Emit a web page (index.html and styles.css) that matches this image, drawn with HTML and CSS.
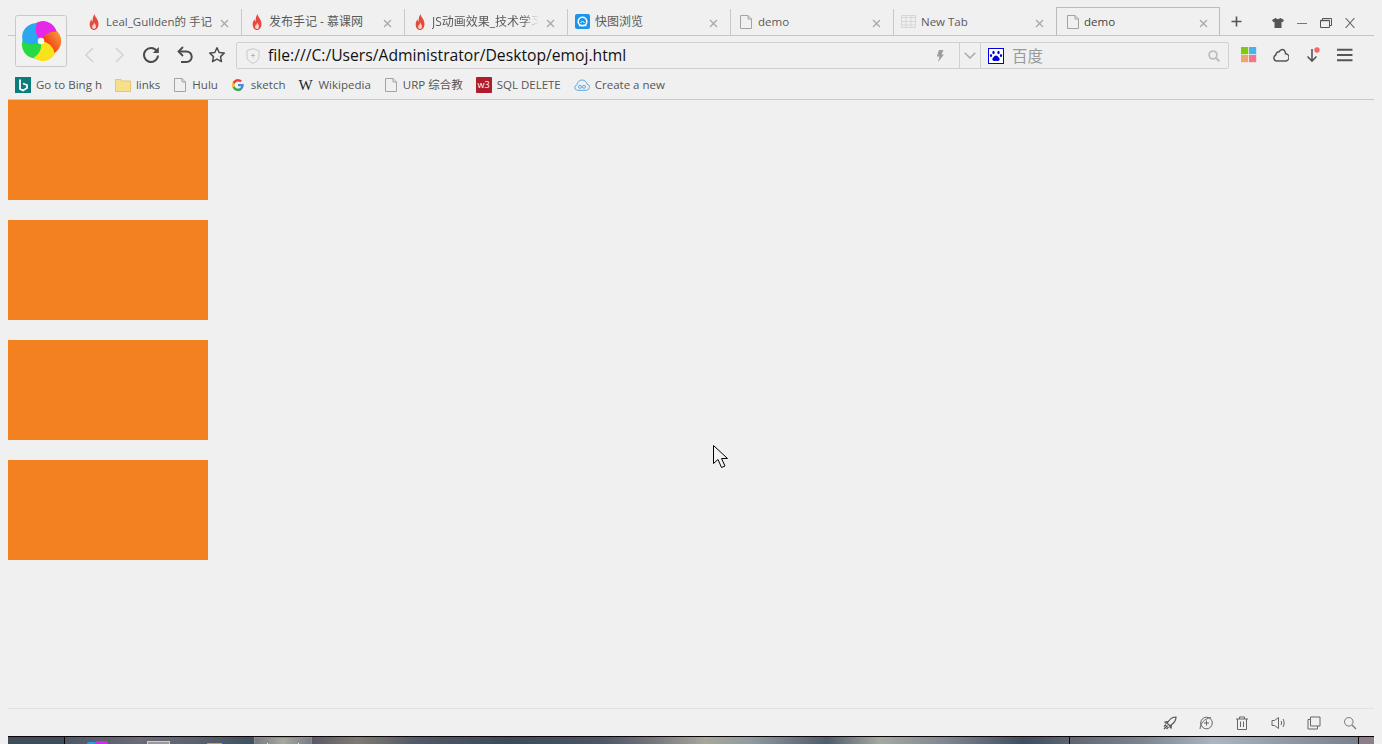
FILE: index.html
```html
<!DOCTYPE html>
<html lang="zh">
<head>
<meta charset="utf-8">
<title>demo</title>
<link rel="stylesheet" href="styles.css">
</head>
<body>
<svg width="0" height="0" class="defs">
  <defs>
    <symbol id="flame" viewBox="0 0 12 16" preserveAspectRatio="xMidYMid meet"><g transform="translate(1 0) scale(.84 1)"><path d="M6.500 0C7 3 11.300 5 11.300 10 11.300 13.500 8.800 16 6 16 3 16 .8 13.500 .8 10.500 .8 8 2 6.500 3 5 3 6.500 3.500 7.300 4.300 7.800 4 5 5 2 6.500 0z" fill="#e4493b"/><path d="M6.300 8.500c.3 1.300 2 2.200 2 4 0 1.400-1 2.500-2.300 2.500S3.700 14 3.700 12.700c0-.9.400-1.500.8-2 .1.400.3.700.6.900 0-1.100.6-2.300 1.200-3.100z" fill="#f8d6cc"/></g></symbol>
    <symbol id="page" viewBox="0 0 12 14"><path d="M.5.500h7.500l3.500 3.500v9.500H.5zM8 .5V4h3.500" fill="none" stroke="#a3a3a3"/></symbol>
    <symbol id="x" viewBox="0 0 9 9"><path d="M1 1l7 7M8 1L1 8" stroke="#a8a8a8" stroke-width="1.300" fill="none"/></symbol>
    <path id="blade" d="M0 0C-5-7-5-15-1-21A16 16 0 0 1 20.500-4.500C13-8 6-6 0 0z"/>
    <linearGradient id="g-orange" x1="0" y1="0" x2="0" y2="1"><stop offset="0" stop-color="#f8963a"/><stop offset="1" stop-color="#f0300c"/></linearGradient>
  </defs>
</svg>
<div class="window">
  <header class="tabstrip">
    <div class="tab"><svg class="tab-icon"><use href="#flame"/></svg><span class="tab-title">Leal_Gullden的 手记</span><svg class="tab-x"><use href="#x"/></svg></div>
    <div class="tab"><svg class="tab-icon"><use href="#flame"/></svg><span class="tab-title cjk">发布手记 - 慕课网</span><svg class="tab-x"><use href="#x"/></svg></div>
    <div class="tab"><svg class="tab-icon"><use href="#flame"/></svg><span class="tab-title cjk fade">JS动画效果_技术学习</span><svg class="tab-x"><use href="#x"/></svg></div>
    <div class="tab"><svg class="tab-icon wide" viewBox="0 0 15 15"><rect width="15" height="15" rx="2" fill="#1b95ea"/><circle cx="7.500" cy="7.500" r="4.300" fill="none" stroke="#fff" stroke-width="1.600"/><path d="M4 11.500h7.500" stroke="#fff" stroke-width="1.500"/><path d="M5.500 9l2-2 2 2" stroke="#fff" fill="none"/></svg><span class="tab-title cjk">快图浏览</span><svg class="tab-x"><use href="#x"/></svg></div>
    <div class="tab"><svg class="tab-icon"><use href="#page"/></svg><span class="tab-title">demo</span><svg class="tab-x"><use href="#x"/></svg></div>
    <div class="tab"><svg class="tab-icon wide" viewBox="0 0 15 13"><path d="M.5 2.500h14M.5 6.500h14M.5 10h14M5 .5v12M10 .5v12M.5.500h14v12H.5z" fill="none" stroke="#d6d6d6"/></svg><span class="tab-title">New Tab</span><svg class="tab-x"><use href="#x"/></svg></div>
    <div class="tab active"><svg class="tab-icon"><use href="#page"/></svg><span class="tab-title">demo</span><svg class="tab-x"><use href="#x"/></svg></div>
    <svg class="newtab" viewBox="0 0 11 11"><path d="M5.500.5v10M.5 5.500h10" stroke="#555" stroke-width="1.600"/></svg>
    <div class="winctl">
      <svg class="ctl" viewBox="0 0 12 10"><path d="M3.500 0L0 2l1.300 2.300 1.200-.5V10h7V3.800l1.200.5L12 2 8.500 0 6 1.200z" fill="#555"/></svg>
      <svg class="ctl" viewBox="0 0 12 10"><path d="M1 5.500h10" stroke="#777"/></svg>
      <svg class="ctl" viewBox="0 0 12 10"><path d="M.5 2.500h9v7h-9zM2.500 2.500V.5h9v7h-2" fill="none" stroke="#555"/><path d="M.5 2.500h9" stroke="#555" stroke-width="1.400"/></svg>
      <svg class="ctl" viewBox="0 0 12 10"><path d="M1.500 0l9 10M10.500 0l-9 10" stroke="#666" stroke-width="1.100"/></svg>
    </div>
  </header>

  <div class="toolbar">
    <div class="nav">
      <svg class="nav-i" viewBox="0 0 18 18"><path d="M12 2L5 9l7 7" fill="none" stroke="#d4d4d4" stroke-width="1.600"/></svg>
      <svg class="nav-i" viewBox="0 0 18 18"><path d="M6 2l7 7-7 7" fill="none" stroke="#d4d4d4" stroke-width="1.600"/></svg>
      <svg class="nav-i reload" viewBox="0 0 18 18"><path d="M14.800 5A7 7 0 1 0 16 9.500" fill="none" stroke="#4c4c4c" stroke-width="2"/><path d="M16.800 1v6H10.800z" fill="#4c4c4c"/></svg>
      <svg class="nav-i undo" viewBox="0 0 18 18"><path d="M7 1L2.500 5.500 7 10" fill="none" stroke="#4c4c4c" stroke-width="1.800"/><path d="M3 5.500h7.500a5 5 0 0 1 0 10.500H5" fill="none" stroke="#4c4c4c" stroke-width="2"/></svg>
      <svg class="nav-i star" viewBox="0 0 18 18"><path d="M9 1.800l2.200 4.700 5 .6-3.700 3.500 1 5L9 13.100l-4.500 2.500 1-5L1.800 7.100l5-.6z" fill="none" stroke="#4c4c4c" stroke-width="1.500" stroke-linejoin="round"/></svg>
    </div>
    <div class="addr">
      <svg class="shield" viewBox="0 0 14 16"><path d="M7 .7l6 1.800v6c0 3.200-2.600 5.500-6 6.800C3.600 14 1 11.700 1 8.500v-6z" fill="none" stroke="#c6c6c6"/><path d="M7 5.500v4M5 7.500h4" stroke="#b5b5b5"/></svg>
      <span class="url">file:///C:/Users/Administrator/Desktop/emoj.html</span>
      <svg class="bolt" viewBox="0 0 8 12"><path d="M3 0h4.500L5.500 4.500H8L2 12l1.500-5.500H.8z" fill="#9c9c9c"/></svg>
      <div class="drop"><svg class="chev" viewBox="0 0 12 7"><path d="M.7.700L6 6l5.300-5.300" fill="none" stroke="#aaa" stroke-width="1.500"/></svg></div>
      <div class="search">
        <svg class="paw" viewBox="0 0 16 16"><rect x=".5" y=".5" width="15" height="15" fill="#fff" stroke="#0000e0"/><g fill="#0000e0"><ellipse cx="5.500" cy="4.500" rx="1.200" ry="1.700"/><ellipse cx="10.500" cy="4.500" rx="1.200" ry="1.700"/><ellipse cx="3" cy="7.500" rx="1.100" ry="1.500"/><ellipse cx="13" cy="7.500" rx="1.100" ry="1.500"/><path d="M8 7.500c1.500 0 2 1.500 3 2.300 1.300 1 .8 3.200-1 3.200-.8 0-1.300-.3-2-.3s-1.200.3-2 .3c-1.800 0-2.300-2.200-1-3.200 1-.8 1.500-2.300 3-2.300z"/></g></svg>
        <span class="engine">百度</span>
        <svg class="mag" viewBox="0 0 12 12"><circle cx="5" cy="5" r="3.900" fill="none" stroke="#bdbdbd" stroke-width="1.800"/><path d="M8 8l3.300 3.300" stroke="#bdbdbd" stroke-width="2"/></svg>
      </div>
    </div>
    <div class="tools">
      <svg class="tool" viewBox="0 0 14 14"><rect width="6.300" height="6.300" fill="#7ecb0e"/><rect x="7" width="6.300" height="6.300" fill="#4fb0ee"/><rect y="7" width="6.300" height="6.300" fill="#f4a272"/><rect x="7" y="7" width="6.300" height="6.300" fill="#f3758a"/></svg>
      <svg class="tool" viewBox="0 0 16 14"><path d="M3.800 13a3 3 0 0 1-1.200-5.700C3 4.500 5 3.500 6.200 3.700 7.200 1.500 10 .8 11.600 2.800c.7.800 1 1.800.9 3a3.600 3.600 0 0 1-.2 7.200z" fill="none" stroke="#555" stroke-width="1.500"/></svg>
      <svg class="tool" viewBox="0 0 16 16"><path d="M7 2v12M2.500 9.500L7 14l4.500-4.500" fill="none" stroke="#555" stroke-width="1.600"/><circle cx="12" cy="3" r="2.700" fill="#f0686a"/></svg>
      <svg class="tool" viewBox="0 0 15 13"><path d="M0 1.500h14.500M0 6.500h14.500M0 11.500h14.500" stroke="#555" stroke-width="1.800"/></svg>
    </div>
  </div>

  <nav class="bookmarks">
    <a class="bm"><svg class="bm-i" viewBox="0 0 16 16"><rect width="16" height="16" fill="#0b7c7c"/><path d="M5 2.500v9.500l3 1.500 4-2.500V8L8 6.500" fill="none" stroke="#fff" stroke-width="1.800"/></svg>Go to Bing h</a>
    <a class="bm"><svg class="bm-i" viewBox="0 0 16 14"><path d="M.5 2.500V1.500h5.500l1 1.500h8.500v10.500H.5z" fill="#f6e08e" stroke="#e5c66e"/></svg>links</a>
    <a class="bm"><svg class="bm-n"><use href="#page"/></svg>Hulu</a>
    <a class="bm"><svg class="bm-n" viewBox="0 0 12 12"><path d="M11.700 6.100c0-.4 0-.8-.1-1.200H6v2.300h3.200c-.1.800-.6 1.400-1.200 1.800v1.500h1.900c1.100-1 1.800-2.600 1.800-4.400z" fill="#4285f4"/><path d="M6 12c1.600 0 3-.5 3.900-1.500L8 9c-.5.400-1.200.6-2 .6-1.500 0-2.800-1-3.300-2.400h-2v1.500C1.700 10.700 3.700 12 6 12z" fill="#34a853"/><path d="M2.700 7.200a3.600 3.600 0 0 1 0-2.300V3.300h-2a6 6 0 0 0 0 5.400z" fill="#fbbc05"/><path d="M6 2.400c.9 0 1.600.3 2.200.9l1.700-1.700A5.700 5.700 0 0 0 6 0C3.700 0 1.700 1.300.7 3.300l2 1.600C3.200 3.400 4.500 2.400 6 2.400z" fill="#ea4335"/></svg><span class="bm-s">sketch</span></a>
    <a class="bm"><span class="wiki">W</span>Wikipedia</a>
    <a class="bm"><svg class="bm-n"><use href="#page"/></svg>URP 综合教</a>
    <a class="bm"><span class="w3">w3</span>SQL DELETE</a>
    <a class="bm"><svg class="bm-i" viewBox="0 0 16 12"><path d="M3.500 11.300a2.800 2.800 0 0 1-.6-5.500C3.500 3 5.500 1 8 1s4.500 1.800 5 4a3.200 3.200 0 0 1-.5 6.300z" fill="none" stroke="#5aa9e6"/><circle cx="6" cy="7.800" r="1.500" fill="none" stroke="#5aa9e6"/><circle cx="10" cy="7.800" r="1.500" fill="none" stroke="#5aa9e6"/></svg>Create a new</a>
  </nav>

  <main class="content">
    <div class="box"></div>
    <div class="box"></div>
    <div class="box"></div>
    <div class="box"></div>
  </main>

  <footer class="status">
    <svg class="st" viewBox="0 0 14 14"><path d="M13 1c-3 0-5.500 1.500-7.300 4L4 7l3 3 2-1.700C11.500 6.500 13 4 13 1zM4.500 5.500L2 6l1.500 1.500M8.500 9.500L8 12l-1.500-1.500M4.500 9.500L1 13M3 8.500L1 10.500M5.500 11L3.500 13" fill="none" stroke="#555" stroke-width="1.200"/></svg>
    <svg class="st" viewBox="0 0 14 14"><circle cx="7.500" cy="7" r="5.800" fill="none" stroke="#666"/><path d="M7.500 4.500v5M5 7h5" stroke="#666"/><path d="M1 13C1.500 7 5 3 12 1.500" fill="none" stroke="#666"/></svg>
    <svg class="st" viewBox="0 0 14 14"><path d="M1 3h12M4.500 3V1h5v2M2.500 3v10.500h9V3M5.500 5.500v5.500M8.500 5.500v5.500" fill="none" stroke="#666"/></svg>
    <svg class="st" viewBox="0 0 14 14"><path d="M1 4.500h2.500L7.500 1.500v11L3.500 9.500H1zM10 5c.8 1.200.8 2.800 0 4M12 3c1.500 2.500 1.500 5.500 0 8" fill="none" stroke="#666"/></svg>
    <svg class="st" viewBox="0 0 14 14"><path d="M3.500 1h9.500v9H3.500zM3.500 3.500H1v9.500h9.500v-3" fill="none" stroke="#666"/></svg>
    <svg class="st" viewBox="0 0 14 14"><circle cx="5.800" cy="5.800" r="4.300" fill="none" stroke="#777"/><path d="M9 9l4 4" stroke="#777" stroke-width="1.200"/></svg>
  </footer>

  <div class="taskbar">
    <div class="task start"></div>
    <div class="task apps">
      <span class="peek peek-blue"></span><span class="peek peek-pink"></span>
      <span class="peek peek-grey"></span>
      <span class="peek peek-orange"></span>
    </div>
    <div class="task current"><span class="peek mark mark-a"></span><span class="peek mark mark-b"></span></div>
    <div class="task wall"></div>
    <div class="task tray"></div>
    <div class="task corner"></div>
  </div>
</div>

<svg class="logo-frame" viewBox="0 0 52 52">
  <rect x=".5" y=".5" width="51" height="51" rx="2" fill="#f1f1f1" stroke="#c9c9c9"/>
  <g transform="translate(26 26) scale(.86)">
    <use href="#blade" fill="#27d944" transform="rotate(198)"/>
    <use href="#blade" fill="#f8e21c" transform="rotate(126)"/>
    <use href="#blade" fill="url(#g-orange)" transform="rotate(54)"/>
    <use href="#blade" fill="#e527e8" transform="rotate(-18)"/>
    <use href="#blade" fill="#2ba6f0" transform="rotate(-90)"/>
    <circle r="3.800" fill="#f4f4f4"/>
  </g>
</svg>
<svg class="cursor" viewBox="0 0 15 25"><path d="M.5.500v18l4.500-4 3.500 8 3.500-1.500-3.500-7.500h6z" fill="#f4f4f4" stroke="#000"/></svg>
</body>
</html>
```

FILE: styles.css
```css
* { box-sizing: border-box; }
html, body { margin: 0; height: 744px; overflow: hidden; }
body {
  background: #f0f0f0;
  font-family: "Open Sans", "Noto Sans CJK SC", sans-serif;
  font-size: 11.5px;
  color: #555;
}
.defs { position: absolute; }
.window { height: 744px; margin: 0 8px; display: flex; flex-direction: column; }

.tabstrip {
  height: 36px;
  padding: 8px 0 0 71px;
  display: flex;
  border-bottom: 1px solid #c6c6c6;
  flex: none;
}
.tab {
  width: 163px;
  height: 26px;
  display: flex;
  align-items: center;
  padding: 0 0 1px 9px;
  border-right: 1px solid #c8c8c8;
  margin-top: 1px;
  flex: none;
}
.tab.active {
  width: 164px;
  height: 28px;
  margin: -1px 0 0 -1px;
  background: #f0f0f0;
  border: 1px solid #bbb;
  border-bottom: 0;
  padding: 0 0 0 10px;
}
.tab-icon { width: 12px; height: 16px; flex: none; margin-right: 6px; }
.tab-icon.wide { width: 15px; height: 15px; margin: 0 5px 0 -2px; }
.tab.active .tab-icon { margin-right: 5px; }
.tab-title { width: 107px; flex: none; white-space: nowrap; overflow: hidden; font-size: 11.5px; color: #5a5a5a; line-height: 17px; }
.tab-title.cjk { font-size: 12px; }
.tab.active .tab-title { color: #444; }
.tab-title.fade { mask-image: linear-gradient(to right, #000 85%, transparent); }
.tab-x { width: 9px; height: 9px; flex: none; margin: 4px 0 0 7px; }
.tab.active .tab-x { margin-left: 8px; }
.newtab { width: 11px; height: 11px; margin: 8px 0 0 11px; flex: none; }
.winctl { display: flex; margin-left: 30px; margin-top: 10px; gap: 12px; }
.ctl { width: 12px; height: 10px; flex: none; }

.toolbar { height: 38px; display: flex; align-items: center; flex: none; padding: 5px 0 6px; }
.nav { width: 228px; padding-left: 73px; display: flex; align-items: center; gap: 11px; flex: none; }
.nav-i { width: 18px; height: 18px; flex: none; }
.reload { margin-left: 3px; }
.undo { margin-left: 5px; }
.star { margin-left: 3px; }
.addr {
  width: 993px;
  height: 27px;
  margin-top: 1px;
  align-self: flex-start;
  border: 1px solid #d0d0d0;
  border-radius: 2px;
  display: flex;
  align-items: center;
  flex: none;
}
.shield { width: 14px; height: 16px; margin-left: 9px; flex: none; }
.url { width: 664px; margin-left: 8px; padding-bottom: 2px; font-size: 15.7px; color: #111; white-space: nowrap; flex: none; }
.bolt { width: 8px; height: 12px; flex: none; margin-left: 4px; }
.drop { width: 21px; height: 25px; margin-left: 15px; border-left: 1px solid #d0d0d0; display: flex; align-items: center; justify-content: center; flex: none; }
.chev { width: 12px; height: 7px; }
.search { flex: 1; height: 25px; border-left: 1px solid #d0d0d0; display: flex; align-items: center; padding: 0 8px 0 7px; }
.paw { width: 16px; height: 16px; flex: none; }
.engine { font-size: 15.5px; color: #9a9a9a; margin-left: 8px; flex: 1; }
.mag { width: 12px; height: 12px; flex: none; }
.tools { display: flex; align-items: center; margin-left: 12px; gap: 16px; }
.tool { width: 16px; height: 16px; flex: none; }

.bookmarks {
  height: 26px;
  border-bottom: 1px solid #c8c8c8;
  display: flex;
  align-items: center;
  gap: 13px;
  padding: 0 0 5px 7px;
  flex: none;
}
.bm { display: flex; align-items: center; gap: 5px; white-space: nowrap; color: #555; }
.bm-i { width: 16px; height: 16px; flex: none; margin-top: 2px; }
.bm-n { width: 12px; height: 14px; flex: none; margin: 2px 1px 0; }
.bm-s { margin-left: 1px; }
.wiki { width: 15px; margin-top: 2px; font-family: "Liberation Serif", serif; font-size: 15px; line-height: 16px; color: #222; flex: none; }
.w3 {
  width: 16px; height: 16px; margin-top: 2px; background: #b01c2e; color: #fff;
  font-size: 9px; line-height: 16px; text-align: center; border-radius: 1px; flex: none;
}

.content { flex: 1; display: flex; flex-direction: column; align-items: flex-start; min-height: 0; }
.box { width: 200px; height: 100px; margin-bottom: 20px; background: #f38120; flex: none; }

.status {
  height: 28px;
  border-top: 1px solid #e2e2e2;
  display: flex;
  justify-content: flex-end;
  align-items: center;
  gap: 22px;
  padding-right: 17px;
  flex: none;
}
.st { width: 14px; height: 14px; flex: none; }

.taskbar {
  height: 8px;
  flex: none;
  display: flex;
  border-top: 1px solid #0c0508;
  background: #5a6570;
}
.task { height: 100%; flex: none; position: relative; overflow: hidden; }
.start { width: 57px; background: #3f4c5a; border-right: 1px solid #0c0508; }
.apps { width: 189px; background: linear-gradient(to right, #4d5866, #6a6a78 40%, #59626f 70%, #3e5060); }
.current { width: 58px; background: linear-gradient(to right, #777b82, #a5a9a0 50%, #7a7e86); border: 1px solid #8b8b93; border-bottom: 0; }
.wall {
  width: 758px;
  background: linear-gradient(to right, #5a5a68, #7f7a72 6%, #4f5968 14%, #3c4a5a 26%, #4b5664 38%, #6d7078 44%, #a5a89a 52%, #8f9ba0 58%, #4f5c6a 68%, #a4aaa2 75%, #7d8690 84%, #3f4d5e 94%, #5c6672);
  border-right: 1px solid #0c0508;
}
.tray { width: 289px; background: linear-gradient(to right, #5f6672, #7a8590 25%, #aab6c2 50%, #8f9aa6 75%, #77828e); border-right: 1px solid #0c0508; }
.corner { flex: 1; background: #8a7f8a; }
.peek { position: absolute; }
.peek-blue { left: 22px; width: 12px; top: 5px; height: 2px; background: #2f9ce8; border-radius: 6px 6px 0 0; }
.peek-pink { left: 30px; width: 13px; top: 4px; height: 3px; background: #d02be8; border-radius: 7px 7px 0 0; }
.peek-grey { left: 82px; width: 23px; top: 4px; height: 3px; background: #9a9a9a; border: 1px solid #ccc; border-bottom: 0; }
.peek-orange { left: 142px; width: 15px; top: 6px; height: 1px; background: #d4a03a; }
.mark { top: 5px; width: 1px; height: 2px; background: #eee; }
.mark-a { left: 12px; }
.mark-b { left: 43px; }

.logo-frame { position: absolute; left: 15px; top: 15px; width: 52px; height: 52px; }
.cursor { position: absolute; left: 713px; top: 445px; width: 15px; height: 25px; }
```
